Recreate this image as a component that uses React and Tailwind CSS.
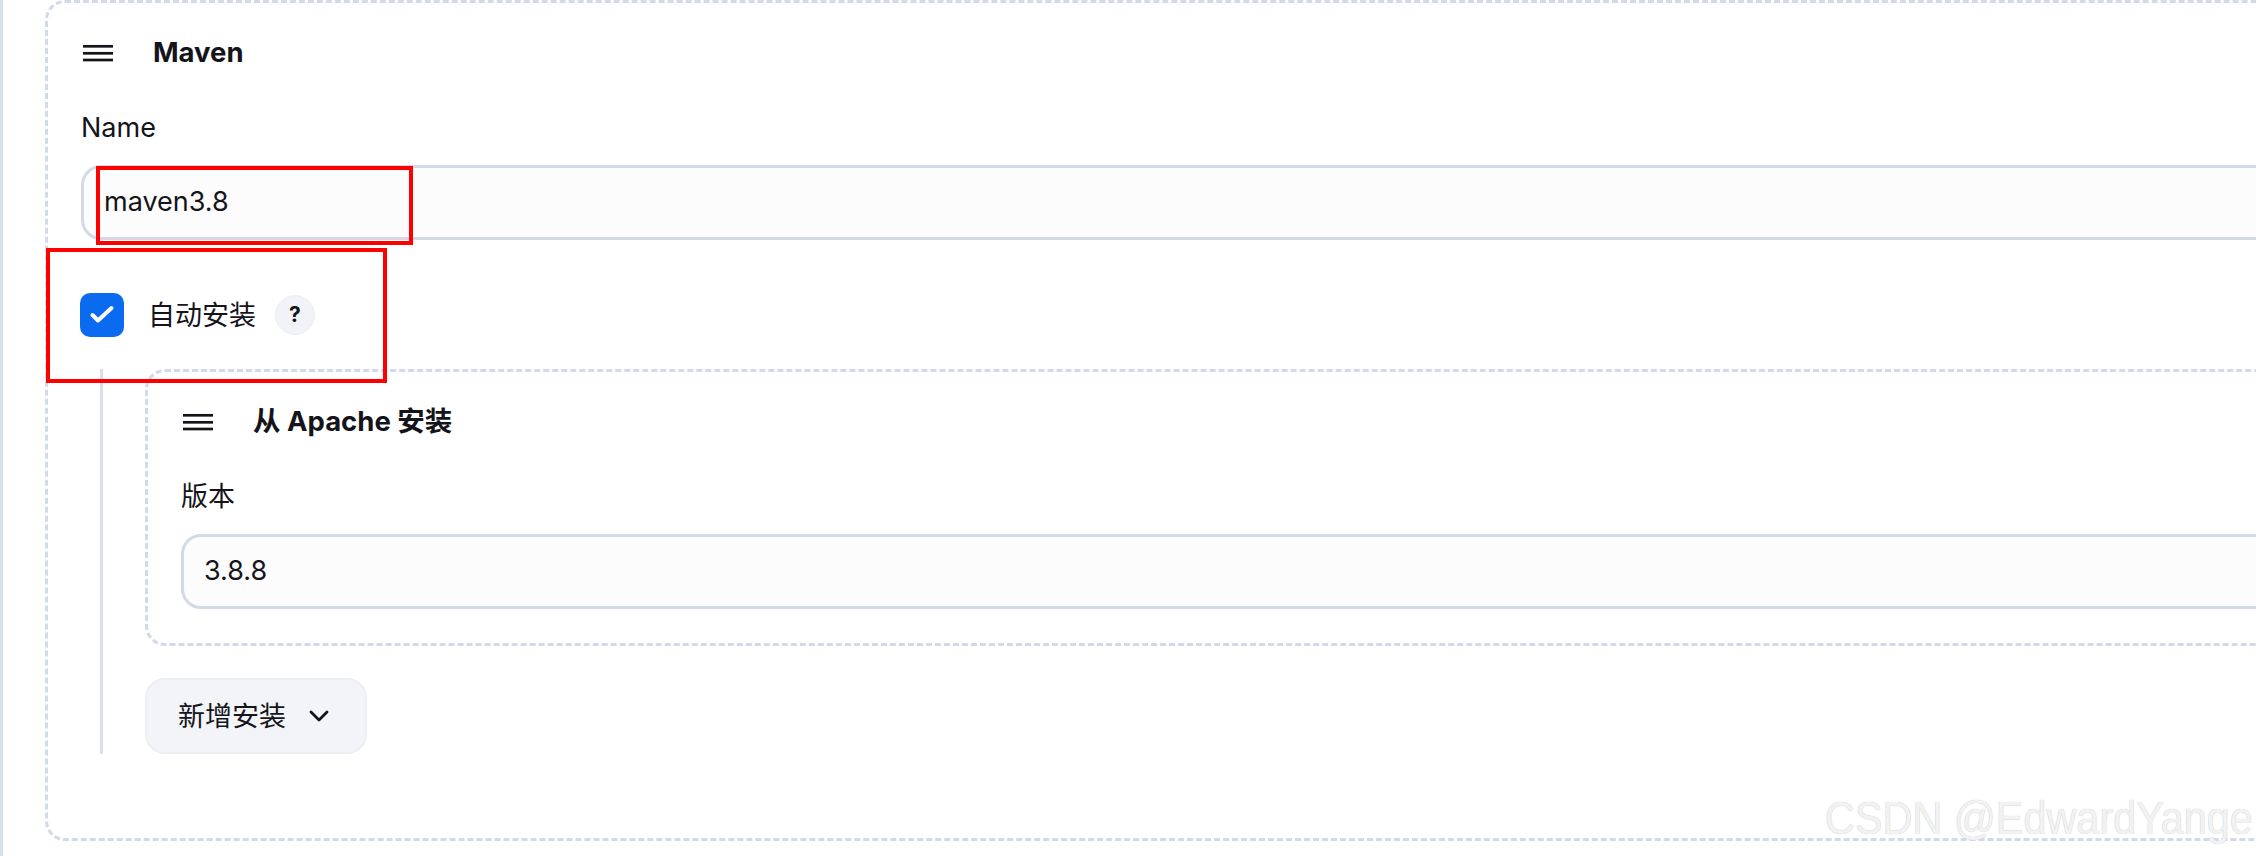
import React from "react";

const FONT = "font-['Inter','Noto_Sans_CJK_SC',sans-serif]";

function Hamburger() {
  return (
    <svg width="30" height="18" viewBox="0 0 30 18" className="ml-[2px] shrink-0">
      <line x1="0" y1="2.3" x2="30" y2="2.3" stroke="#14141a" strokeWidth="2.7" />
      <line x1="0" y1="9.3" x2="30" y2="9.3" stroke="#14141a" strokeWidth="2.7" />
      <line x1="0" y1="16" x2="30" y2="16" stroke="#14141a" strokeWidth="2.7" />
    </svg>
  );
}

function Header({ title }) {
  return (
    <div className="flex h-[44px] items-center gap-[40px]">
      <Hamburger />
      <span className="text-[27.5px] font-bold leading-none text-[#14141a] whitespace-nowrap">{title}</span>
    </div>
  );
}

function Field({ label, value }) {
  return (
    <>
      <div className="mt-[35px] text-[27px] leading-[36px] text-[#14141a]">{label}</div>
      <div className="mt-[19px] flex h-[75px] items-center rounded-[20px] border-[3px] border-[#d3d9e6] bg-[#fcfcfc] pl-[20px] text-[27px] text-[#14141a]">
        {value}
      </div>
    </>
  );
}

export default function App() {
  return (
    <div className={`relative h-[856px] w-full overflow-hidden border-l-[3px] border-[#d9dfeb] bg-white ${FONT}`}>
      <div className="ml-[42px] box-border h-[841px] w-[2400px] rounded-[20px] border-[3px] border-dashed border-[#d2d9e8] pl-[33px] pt-[28px]">
        <Header title="Maven" />
        <Field label="Name" value="maven3.8" />

        <div className="mt-[53px] flex h-[44px] items-center">
          <div className="-ml-px flex h-[44px] w-[44px] items-center justify-center rounded-[10px] bg-[#0b6bf0]">
            <svg width="44" height="44" viewBox="0 0 44 44">
              <path d="M12.5 22 L18 27.5 L31.5 15" fill="none" stroke="#fff" strokeWidth="4" strokeLinecap="round" strokeLinejoin="round" />
            </svg>
          </div>
          <span className="ml-[24px] text-[27px] leading-none text-[#14141a]">自动安装</span>
          <span className="ml-[19px] flex h-[40px] w-[40px] items-center justify-center rounded-full border border-[#eceef4] bg-[#f2f3f8] text-[21px] font-bold text-[#14141a]">
            ?
          </span>
        </div>

        <div className="ml-[19px] mt-[32px] border-l-[3px] border-[#d9dfeb] pl-[42px]">
          <div className="rounded-[20px] border-[3px] border-dashed border-[#d2d9e8] pb-[34px] pl-[33px] pt-[28px]">
            <Header title="从 Apache 安装" />
            <Field label="版本" value="3.8.8" />
          </div>
          <div className="mt-[32px] flex h-[76px] w-[222px] items-center rounded-[20px] border-2 border-[#eceef3] bg-[#f2f4f8] pl-[31px]">
            <span className="text-[27px] leading-none text-[#14141a]">新增安装</span>
            <svg width="20" height="12" viewBox="0 0 20 12" className="ml-[23px]">
              <path d="M2 2 L10 10 L18 2" fill="none" stroke="#14141a" strokeWidth="2.8" strokeLinecap="round" strokeLinejoin="round" />
            </svg>
          </div>
        </div>
      </div>

      {/* annotation overlays */}
      <div className="pointer-events-none absolute left-[93px] top-[166px] h-[79px] w-[317px] border-4 border-[#ff0000]" />
      <div className="pointer-events-none absolute left-[43px] top-[248px] h-[135px] w-[341px] border-4 border-[#ff0000]" />

      {/* watermark */}
      <div className="pointer-events-none absolute left-[1822px] top-[795px] origin-left scale-x-[0.9] whitespace-nowrap font-['Liberation_Sans',sans-serif] text-[46px] leading-[46px] text-[#f2f2f2] [text-shadow:0_0_1px_#b8b8b8]">
        CSDN @EdwardYange
      </div>
    </div>
  );
}
